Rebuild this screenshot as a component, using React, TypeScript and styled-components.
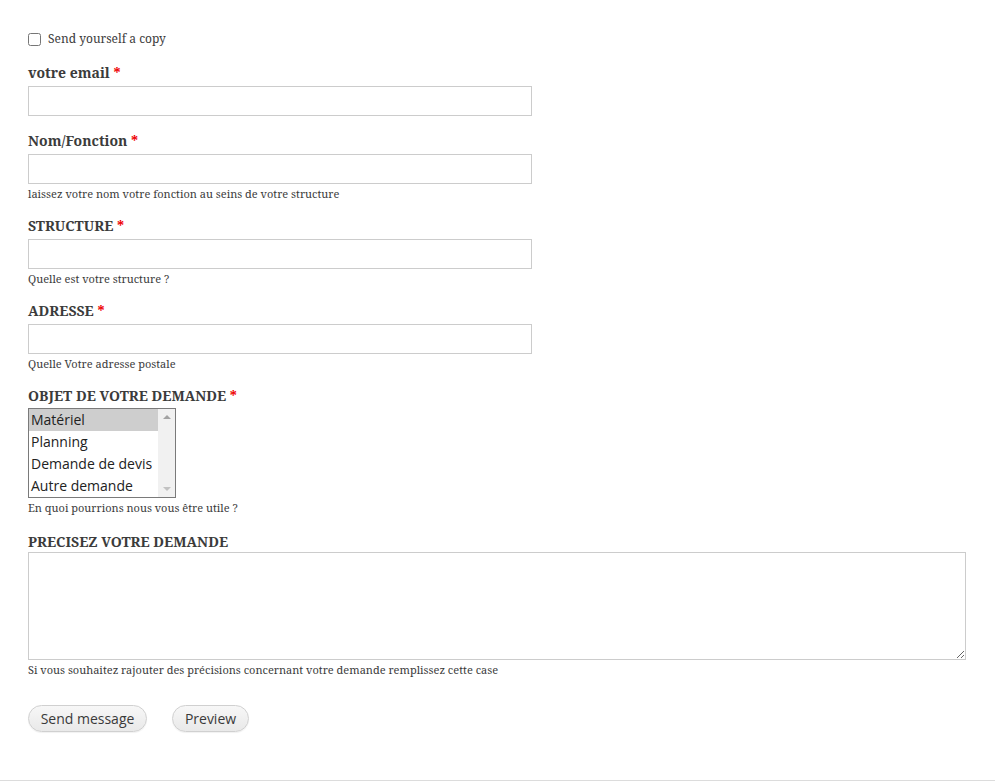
import styled, { createGlobalStyle } from "styled-components";

const Global = createGlobalStyle`
  html, body { margin: 0; padding: 0; background: #fff; }
  body {
    color: #3b3b3b;
    font-family: "Noto Serif", "DejaVu Serif", serif;
  }
`;

const Page = styled.div`
  min-height: 781px;
  display: flex;
  flex-direction: column;
`;

const Form = styled.form`
  padding: 30px 0 0 28px;
  display: flex;
  flex-direction: column;
  flex: 1;
`;

const CheckRow = styled.label`
  display: flex;
  align-items: center;
  gap: 7px;
  font-size: 12px;
  line-height: 18px;
  margin-bottom: 16px;

  input {
    margin: 0;
    width: 13px;
    height: 13px;
  }
`;

const Item = styled.div<{ $gap?: number }>`
  display: flex;
  flex-direction: column;
  align-items: flex-start;
  margin-bottom: ${(p) => p.$gap ?? 16}px;
`;

const Label = styled.label<{ $space?: number }>`
  font-size: 14px;
  font-weight: 700;
  line-height: 18px;
  margin-bottom: ${(p) => p.$space ?? 4}px;
`;

const Req = styled.span`
  color: #e00;
  font-weight: 700;
`;

const TextInput = styled.input`
  box-sizing: border-box;
  width: 504px;
  height: 30px;
  border: 1px solid #cccccc;
  background: #fff;
  padding: 4px 6px;
  margin: 0;
  font-size: 14px;
`;

const Help = styled.div`
  font-size: 11px;
  line-height: 15px;
  margin-top: 2px;
`;

const ListBox = styled.div`
  box-sizing: border-box;
  width: 148px;
  height: 90px;
  border: 1px solid #7a7a7a;
  display: flex;
  background: #fff;
`;

const Options = styled.ul`
  list-style: none;
  margin: 0;
  padding: 0;
  flex: 1;
  font-family: "Open Sans", "Noto Sans", sans-serif;
  font-size: 14px;
  color: #222;
  overflow: hidden;
`;

const Option = styled.li<{ $selected?: boolean }>`
  height: 22px;
  line-height: 22px;
  padding-left: 2px;
  white-space: nowrap;
  background: ${(p) => (p.$selected ? "#cecece" : "transparent")};
`;

const ScrollTrack = styled.div`
  width: 17px;
  background: #f1f1f1;
  display: flex;
  flex-direction: column;
  justify-content: space-between;
  align-items: center;
  padding: 6px 0;
`;

const Arrow = styled.span<{ $down?: boolean }>`
  width: 0;
  height: 0;
  border-left: 4px solid transparent;
  border-right: 4px solid transparent;
  ${(p) =>
    p.$down
      ? "border-top: 4px solid #c2c2c2;"
      : "border-bottom: 4px solid #a3a3a3;"}
`;

const TextArea = styled.textarea`
  box-sizing: border-box;
  display: block;
  width: 938px;
  height: 108px;
  border: 1px solid #cccccc;
  margin: 0;
  padding: 4px;
  font-size: 14px;
`;

const Actions = styled.div`
  display: flex;
  gap: 25px;
  margin-top: 28px;
`;

const Button = styled.button<{ $w: number }>`
  box-sizing: border-box;
  width: ${(p) => p.$w}px;
  height: 27px;
  border: 1px solid #d0d0d0;
  border-radius: 14px;
  background: linear-gradient(#f7f7f7, #e9e9e9);
  font-family: "Open Sans", "Noto Sans", sans-serif;
  font-size: 14px;
  color: #3a3a3a;
  padding: 0;
  cursor: pointer;
  box-shadow: 0 1px 1px rgba(0, 0, 0, 0.06);
`;

const Footer = styled.div`
  height: 1px;
  background: #dcdcdc;
  margin-top: auto;
`;

const fields = [
  { label: "votre email", help: "" },
  { label: "Nom/Fonction", help: "laissez votre nom votre fonction au seins de votre structure" },
  { label: "STRUCTURE", help: "Quelle est votre structure ?" },
  { label: "ADRESSE", help: "Quelle Votre adresse postale" },
];

const choices = ["Matériel", "Planning", "Demande de devis", "Autre demande"];

export default function App() {
  return (
    <Page>
      <Global />
      <Form onSubmit={(e) => e.preventDefault()}>
        <CheckRow>
          <input type="checkbox" />
          Send yourself a copy
        </CheckRow>

        {fields.map((f) => (
          <Item key={f.label}>
            <Label>
              {f.label} <Req>*</Req>
            </Label>
            <TextInput type="text" />
            {f.help && <Help>{f.help}</Help>}
          </Item>
        ))}

        <Item $gap={18}>
          <Label $space={3}>
            OBJET DE VOTRE DEMANDE <Req>*</Req>
          </Label>
          <ListBox>
            <Options>
              {choices.map((c, i) => (
                <Option key={c} $selected={i === 0}>
                  {c}
                </Option>
              ))}
            </Options>
            <ScrollTrack>
              <Arrow />
              <Arrow $down />
            </ScrollTrack>
          </ListBox>
          <Help>En quoi pourrions nous vous être utile ?</Help>
        </Item>

        <Item $gap={0}>
          <Label $space={1}>PRECISEZ VOTRE DEMANDE</Label>
          <TextArea />
          <Help>Si vous souhaitez rajouter des précisions concernant votre demande remplissez cette case</Help>
        </Item>

        <Actions>
          <Button type="submit" $w={119}>Send message</Button>
          <Button type="button" $w={77}>Preview</Button>
        </Actions>
      </Form>
      <Footer />
    </Page>
  );
}
